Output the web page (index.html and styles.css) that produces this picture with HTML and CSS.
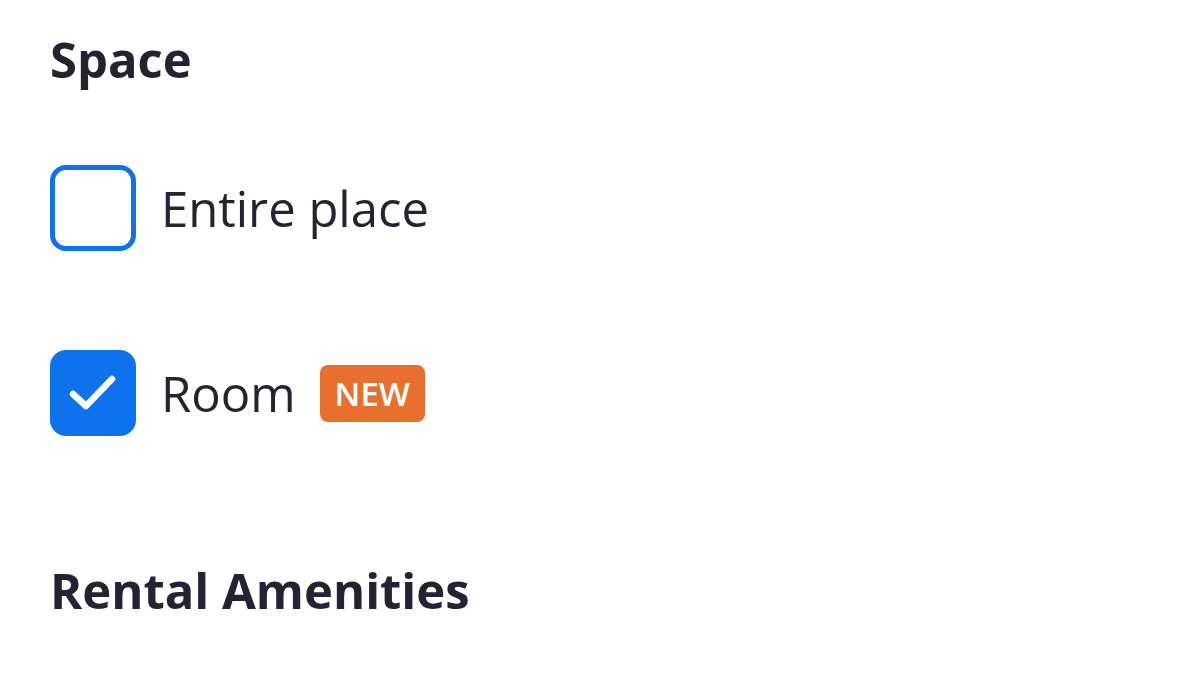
FILE: index.html
```html
<!DOCTYPE html>
<html>
<head>
<meta charset="utf-8">
<link rel="stylesheet" href="styles.css">
</head>
<body>
<div class="panel">
  <h2 class="heading">Space</h2>
  <div class="options">
    <label class="option">
      <span class="box"></span>
      <span class="label">Entire place</span>
    </label>
    <label class="option">
      <span class="box checked">
        <svg width="86" height="86" viewBox="0 0 86 86"><path d="M23 44 L36 56 L62 29" fill="none" stroke="#fff" stroke-width="6.5" stroke-linecap="round" stroke-linejoin="round"/></svg>
      </span>
      <span class="label">Room</span>
      <span class="badge">NEW</span>
    </label>
  </div>
  <h2 class="heading second">Rental Amenities</h2>
</div>
</body>
</html>
```
FILE: styles.css
```css
html, body {
  margin: 0;
  padding: 0;
  background: #ffffff;
}
body {
  font-family: "Open Sans", sans-serif;
  color: #232333;
}
.panel {
  padding: 23px 50px 0 50px;
}
.heading {
  margin: 0;
  font-size: 49px;
  font-weight: 700;
  line-height: 72px;
}
.options {
  display: flex;
  flex-direction: column;
  gap: 99px;
  margin-top: 70px;
}
.option {
  display: flex;
  align-items: center;
  height: 86px;
}
.box {
  box-sizing: border-box;
  width: 86px;
  height: 86px;
  border: 5px solid #0e72ed;
  border-radius: 16px;
  flex: none;
  position: relative;
}
.box.checked {
  background: #0e72ed;
}
.box.checked svg {
  position: absolute;
  left: -5px;
  top: -5px;
}
.label {
  margin-left: 25px;
  font-size: 49px;
  line-height: 60px;
  font-weight: 400;
}
.badge {
  margin-left: 24px;
  background: #e8702f;
  color: #fff;
  font-size: 33px;
  font-weight: 600;
  line-height: 57px;
  padding: 0 15px;
  border-radius: 8px;
}
.heading.second {
  margin-top: 118px;
}
```
